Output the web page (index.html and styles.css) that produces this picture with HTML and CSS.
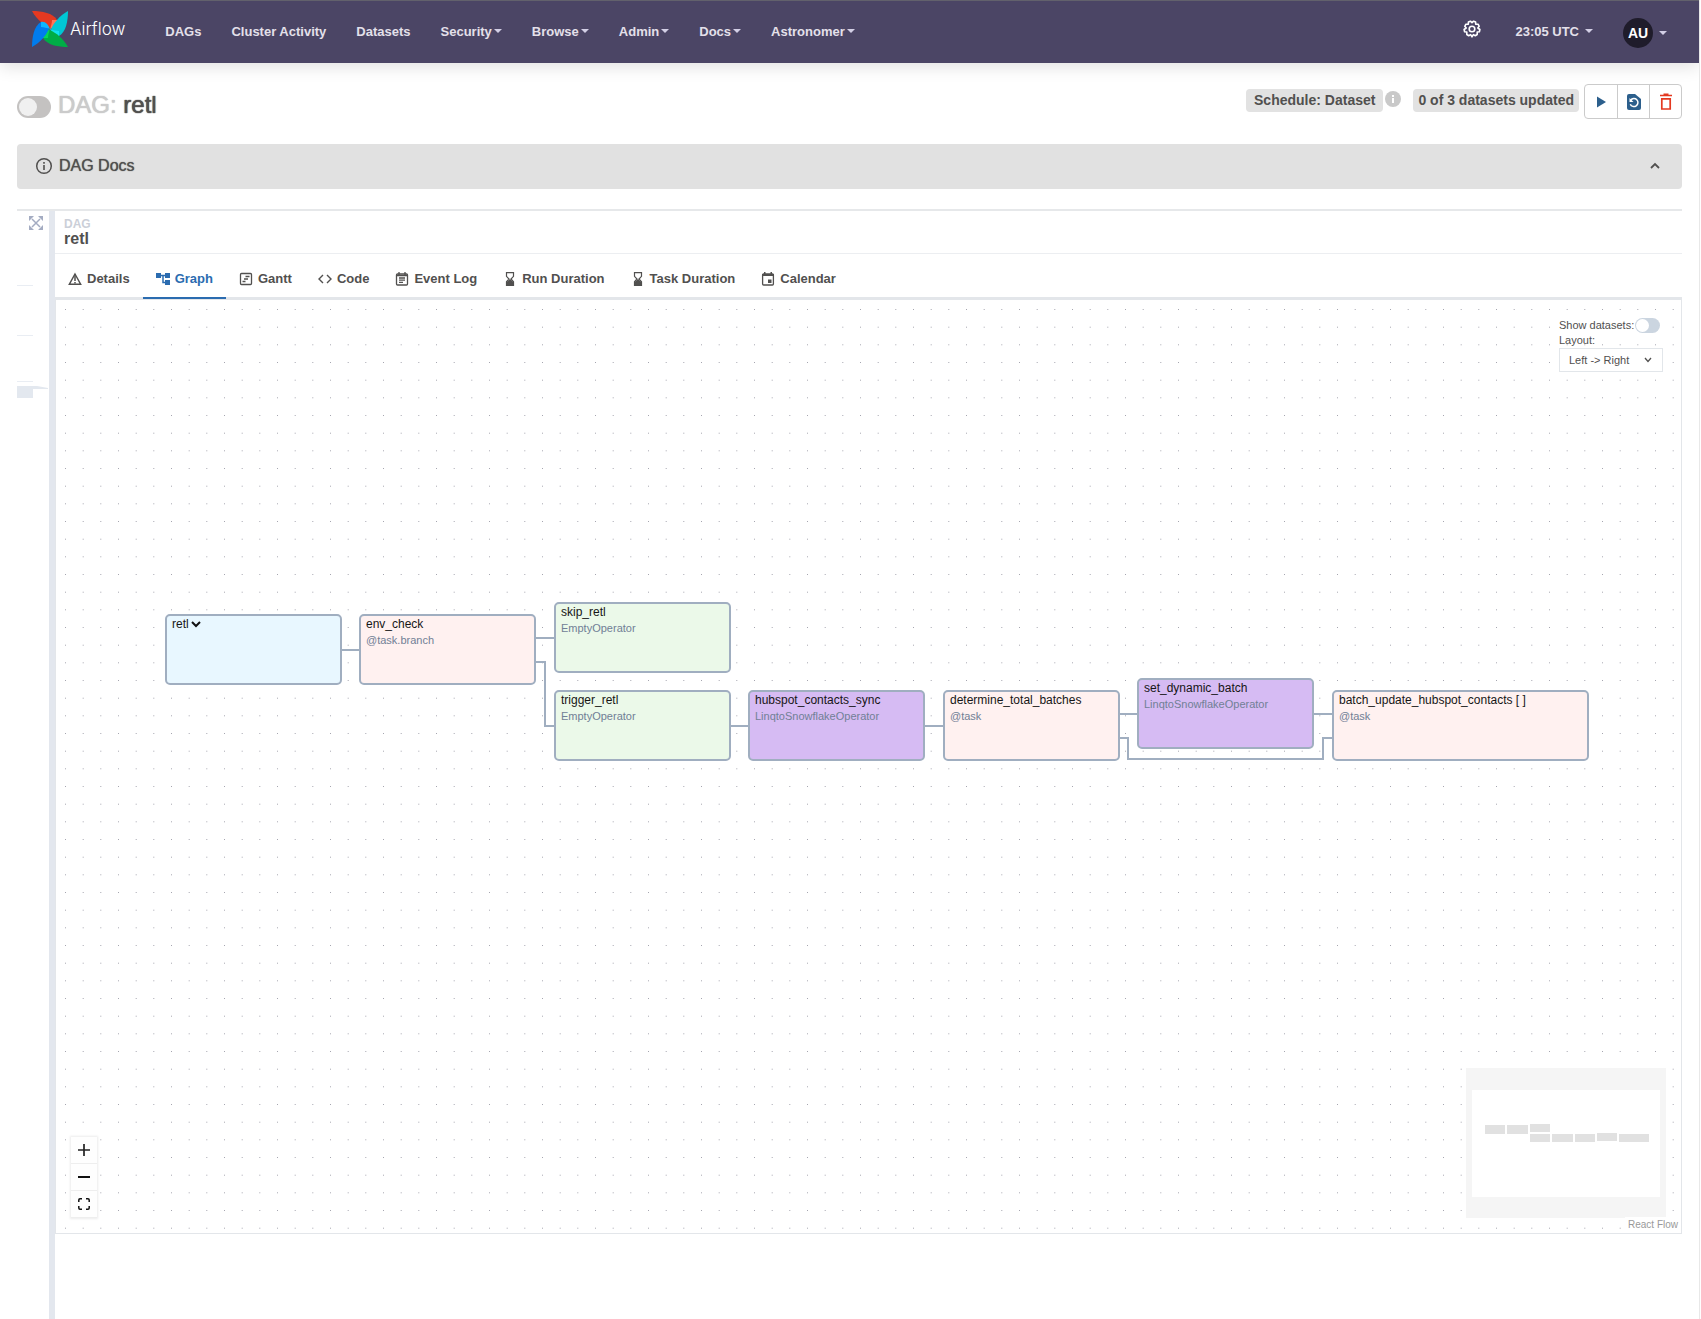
FILE: index.html
```html
<!DOCTYPE html>
<html lang="en">
<head>
<meta charset="utf-8">
<title>retl - Graph - Airflow</title>
<link rel="stylesheet" href="styles.css">
</head>
<body>
<header class="navbar">
  <a class="brand" href="#">
    <svg width="36" height="36" viewBox="0 0 36 36" aria-hidden="true">
      <path d="M0 0C10 0 21 2 25 9L18 17C12 14 5 9 0 0Z" fill="#e43921"/>
      <path d="M20 9L25 9C26 13 23 16 18 18C19 15 20 12 20 9Z" fill="#ff7557"/>
      <path d="M36 0C36 10 34 21 27 25L19 18C22 12 27 5 36 0Z" fill="#00c7d4"/>
      <path d="M27 20L27 25C23 26 20 23 18 18C21 19 24 20 27 20Z" fill="#11e1ee"/>
      <path d="M36 36C26 36 15 34 11 27L18 19C24 22 31 27 36 36Z" fill="#00ad46"/>
      <path d="M16 27L11 27C10 23 13 20 18 18C17 21 16 24 16 27Z" fill="#04d659"/>
      <path d="M0 36C0 26 2 15 9 11L17 18C14 24 9 31 0 36Z" fill="#017cee"/>
      <path d="M9 16L9 11C13 10 16 13 18 18C15 17 12 16 9 16Z" fill="#0cb6ff"/>
    </svg>
    <span>Airflow</span>
  </a>
  <nav class="menu">
    <a href="#">DAGs</a>
    <a href="#">Cluster Activity</a>
    <a href="#">Datasets</a>
    <button type="button">Security<i class="caret"></i></button>
    <button type="button">Browse<i class="caret"></i></button>
    <button type="button">Admin<i class="caret"></i></button>
    <button type="button">Docs<i class="caret"></i></button>
    <button type="button">Astronomer<i class="caret"></i></button>
  </nav>
  <div class="tools">
    <button type="button" class="gear" aria-label="Settings">
      <svg width="18" height="18" viewBox="0 0 18 18" fill="none" stroke="#fff" stroke-width="1.6" stroke-linejoin="round"><path d="M7.4 1.2L9 2.6L10.6 1.2L12.6 2L12.7 4.1L15.2 4.3L16.2 6.3L14.8 8L16.9 9.5L16.4 11.7L14.2 12L14.2 14.5L12.3 15.7L10.4 14.6L9 16.8L7.6 14.6L5.7 15.7L3.8 14.5L3.8 12L1.6 11.7L1.1 9.5L3.2 8L1.8 6.3L2.8 4.3L5.3 4.1L5.4 2Z"/><circle cx="9" cy="9" r="2.8"/></svg>
    </button>
    <button type="button" class="clock">23:05 UTC<i class="caret"></i></button>
    <button type="button" class="user"><span class="avatar">AU</span><i class="caret"></i></button>
  </div>
</header>

<main>
  <div class="title-row">
    <input type="checkbox" class="pause" id="pause" aria-label="Pause or unpause DAG">
    <h1><span>DAG:</span> retl</h1>
    <div class="dag-info">
      <a class="badge" href="#">Schedule: Dataset</a>
      <svg class="hint" width="16" height="16" viewBox="0 0 16 16"><circle cx="8" cy="8" r="8" fill="#c9c9c9"/><path d="M7 7h2v5H7zM7 4h2v2H7z" fill="#fff"/></svg>
      <a class="badge badge-wide" href="#">0 of 3 datasets updated</a>
      <div class="actions">
        <button type="button" aria-label="Trigger DAG"><svg width="20" height="20" viewBox="0 0 20 20"><path d="M6 4.5V15.500L15 10Z" fill="#2c5f8c"/></svg></button>
        <button type="button" aria-label="Reparse DAG"><svg width="20" height="20" viewBox="0 0 20 20"><path d="M5 2h6l6 5v9a2 2 0 0 1-2 2H5a2 2 0 0 1-2-2V4a2 2 0 0 1 2-2z" fill="#2c5f8c"/><path d="M6.700 8.200A4 4 0 1 1 6.300 12.200" fill="none" stroke="#fff" stroke-width="1.500"/><path d="M5.500 6v4h4z" fill="#fff"/></svg></button>
        <button type="button" aria-label="Delete DAG"><svg width="20" height="20" viewBox="0 0 20 20" fill="none" stroke="#e43921" stroke-width="1.700"><path d="M4 3.500h12M7.500 2.300h5M5.800 6.800h8.400V17H5.800z"/></svg></button>
      </div>
    </div>
  </div>

  <button type="button" class="docs">
    <svg width="18" height="18" viewBox="0 0 18 18"><circle cx="9" cy="9" r="7.300" fill="none" stroke="#51504f" stroke-width="1.500"/><path d="M8.200 8h1.600v5H8.200zM8.200 5h1.600v1.700H8.200z" fill="#51504f"/></svg>
    <span>DAG Docs</span>
    <svg class="chev" width="12" height="12" viewBox="0 0 12 12"><path d="M2 8L6 4L10 8" fill="none" stroke="#51504f" stroke-width="1.800"/></svg>
  </button>

  <div class="workspace">
    <aside class="grid-pane">
      <button type="button" aria-label="Expand grid"><svg width="14" height="14" viewBox="0 0 14 14"><path d="M3 3L11 11M11 3L3 11" stroke="#a4acc2" stroke-width="1.500"/><path d="M0 0h5L0 5zM14 0v5L9 0zM0 14V9l5 5zM14 14H9l5-5z" fill="#a4acc2"/></svg></button>
      <svg width="32" height="120" viewBox="0 0 32 120"><path d="M0 5.500h16M0 55.500h16M0 101.500h16" stroke="#e9edf3"/><path d="M0 106h20L31 108v1H16v9H0z" fill="#e3e8ef"/></svg>
    </aside>
    <div class="handle"></div>
    <section class="detail">
      <div class="crumb"><small>DAG</small><strong>retl</strong></div>
      <div class="tabs" role="tablist">
        <button type="button" role="tab"><svg viewBox="0 0 14 14"><path d="M7 2L12.700 12.300H1.300Z" fill="none" stroke="currentColor" stroke-width="1.400"/><path d="M7 2v7M7 10v1.500" stroke="currentColor" stroke-width="1.500"/></svg>Details</button>
        <button type="button" role="tab" aria-selected="true" class="active"><svg viewBox="0 0 14 14"><path d="M0 1h5v5H0zM9 1h5v5H9zM9 8h5v5H9z" fill="currentColor"/><path d="M5 3.500h4M7 3.500v7h2" fill="none" stroke="currentColor" stroke-width="1.500"/></svg>Graph</button>
        <button type="button" role="tab"><svg viewBox="0 0 14 14" fill="none" stroke="currentColor" stroke-width="1.300"><rect x="1.500" y="1.500" width="11" height="11" rx="1"/><path d="M6.500 4.500h4M5 7h4M3.500 9.500h3"/></svg>Gantt</button>
        <button type="button" role="tab"><svg viewBox="0 0 14 14" fill="none" stroke="currentColor" stroke-width="1.400"><path d="M5 3L1 7L5 11M9 3L13 7L9 11"/></svg>Code</button>
        <button type="button" role="tab"><svg viewBox="0 0 14 14" fill="none" stroke="currentColor" stroke-width="1.300"><rect x="1.500" y="2" width="11" height="11" rx="1"/><path d="M4 0v3M10 0v3M1.500 3.500h11M4 6h6M4 8.200h6M4 10.400h4"/></svg>Event Log</button>
        <button type="button" role="tab"><svg viewBox="0 0 14 14"><path d="M3.500.700h7v3.600L8 7l2.500 2.700v3.600h-7V9.700L6 7L3.500 4.300z" fill="none" stroke="currentColor" stroke-width="1.200"/><path d="M7 7l3.500 3v3.300h-7V10z" fill="currentColor"/></svg>Run Duration</button>
        <button type="button" role="tab"><svg viewBox="0 0 14 14"><path d="M3.500.700h7v3.600L8 7l2.500 2.700v3.600h-7V9.700L6 7L3.500 4.300z" fill="none" stroke="currentColor" stroke-width="1.200"/><path d="M7 7l3.500 3v3.300h-7V10z" fill="currentColor"/></svg>Task Duration</button>
        <button type="button" role="tab"><svg viewBox="0 0 14 14"><rect x="1.600" y="2" width="10.800" height="11" rx="1" fill="none" stroke="currentColor" stroke-width="1.300"/><path d="M1 2h12v2H1zM3 0h1.500v2H3zM9.500 0H11v2H9.500zM7 7.500h3.500V11H7z" fill="currentColor"/></svg>Calendar</button>
      </div>

      <div class="canvas">
        <svg class="layer" aria-hidden="true">
          <defs>
            <pattern id="dots" x="9" y="9" width="53" height="53" patternUnits="userSpaceOnUse">
              <path d="M0 .5h1m16.700 0h1m16.600 0h1M0 18.200h1m16.700 0h1m16.600 0h1M0 35.800h1m16.700 0h1m16.600 0h1" stroke="#a6a6b0" stroke-width="1"/>
            </pattern>
          </defs>
          <rect width="100%" height="100%" fill="url(#dots)"/>
          <path d="M285 350H303M480 338H498M480 362H489V426H498M675 426H692M869 426H887M1063 414H1081M1063 438H1072V459H1267V438H1276M1258 414H1276" fill="none" stroke="#a0aec0" stroke-width="2"/>
        </svg>

        <div class="node dag" style="left:109px;top:314px"><button type="button">retl <svg width="10" height="7" viewBox="0 0 10 7"><path d="M1 1L5 5L9 1" fill="none" stroke="#111" stroke-width="2"/></svg></button></div>
        <div class="node task" style="left:303px;top:314px"><b>env_check</b><span>@task.branch</span></div>
        <div class="node empty" style="left:498px;top:302px"><b>skip_retl</b><span>EmptyOperator</span></div>
        <div class="node empty" style="left:498px;top:390px"><b>trigger_retl</b><span>EmptyOperator</span></div>
        <div class="node snow" style="left:692px;top:390px"><b>hubspot_contacts_sync</b><span>LinqtoSnowflakeOperator</span></div>
        <div class="node task" style="left:887px;top:390px"><b>determine_total_batches</b><span>@task</span></div>
        <div class="node snow" style="left:1081px;top:378px"><b>set_dynamic_batch</b><span>LinqtoSnowflakeOperator</span></div>
        <div class="node task mapped" style="left:1276px;top:390px"><b>batch_update_hubspot_contacts [ ]</b><span>@task</span></div>

        <div class="options">
          <div class="switch-row"><label for="ds">Show datasets:</label><input type="checkbox" id="ds"></div>
          <label for="layout">Layout:</label>
          <div class="select">
            <select id="layout"><option>Left -&gt; Right</option><option>Right -&gt; Left</option></select>
            <svg width="10" height="10" viewBox="0 0 10 10"><path d="M2 3L5 6.500L8 3" fill="none" stroke="#51504f" stroke-width="1.300"/></svg>
          </div>
        </div>

        <div class="controls">
          <button type="button" aria-label="Zoom in"><svg width="12" height="12" viewBox="0 0 12 12"><path d="M6 0v12M0 6h12" stroke="#222" stroke-width="1.700"/></svg></button>
          <button type="button" aria-label="Zoom out"><svg width="12" height="12" viewBox="0 0 12 12"><path d="M0 6h12" stroke="#111" stroke-width="2"/></svg></button>
          <button type="button" aria-label="Fit view"><svg width="12" height="12" viewBox="0 0 12 12"><path d="M.8 4V2q0-1.200 1.200-1.200h2M8 .8h2q1.200 0 1.200 1.200v2M11.200 8v2q0 1.200-1.200 1.200H8M4 11.200H2Q.8 11.200.8 10V8" fill="none" stroke="#111" stroke-width="1.500"/></svg></button>
        </div>

        <svg class="minimap" width="200" height="150" viewBox="0 0 200 150" aria-hidden="true">
          <rect width="200" height="150" fill="#f5f5f5"/>
          <rect x="6" y="22" width="188" height="107" fill="#fff"/>
          <path d="M19 57h20v9H19zM41 57h21v9H41zM64 56h20v8H64zM64 66h20v8H64zM86 66h21v8H86zM109 66h20v8H109zM131 65h20v8H131zM153 66h30v8H153z" fill="#e1e1e1"/>
        </svg>
        <a class="credit" href="#">React Flow</a>
      </div>
    </section>
  </div>
</main>
</body>
</html>
```
FILE: styles.css
```css
* { box-sizing: border-box; }
body {
  margin: 0 1px 0 0;
  border-right: 1px solid #e8e8e8;
  min-height: 100vh;
  display: flex;
  flex-direction: column;
  background: #fff;
  color: #51504f;
  font-family: "Liberation Sans", Arial, sans-serif;
  font-size: 14px;
}
button, select, input { font: inherit; color: inherit; margin: 0; }
button { border: 0; padding: 0; background: none; cursor: pointer; }
a { color: inherit; text-decoration: none; }
svg { display: block; flex: none; }

/* Top navigation */
.navbar {
  height: 63px;
  display: flex;
  align-items: center;
  padding: 0 32px 2px;
  border-top: 1px solid #62616c;
  background: #4b4565;
  color: #e4e0ea;
  font-size: 13px;
  font-weight: bold;
  box-shadow: 0 4px 16px rgba(0, 0, 0, .12);
}
.brand { display: flex; align-items: center; gap: 2px; margin-bottom: 4px; color: #fff; font: 300 17px/20px Inter, sans-serif; }
.menu { display: flex; gap: 30px; margin-left: 40px; }
.menu button, .tools button { display: flex; align-items: center; font-weight: bold; }
.caret { margin-left: 2px; border: 4px solid transparent; border-top-color: #d3cfe6; border-bottom: 0; }
.tools { display: flex; align-items: center; margin-left: auto; }
.gear { margin: 0 34px 4px 0; }
.clock .caret { margin-left: 6px; }
.user { margin: 4px 0 0 30px; }
.user .caret { margin-left: 6px; }
.avatar { width: 30px; height: 30px; border-radius: 50%; background: #1f1c2b; color: #fff; font-size: 14px; line-height: 30px; text-align: center; }

main { flex: 1; display: flex; flex-direction: column; padding: 0 17px; }

/* DAG title and actions */
.title-row { height: 81px; display: flex; align-items: flex-start; padding-top: 21px; }
.pause, .switch-row input { appearance: none; border-radius: 99px; display: flex; align-items: center; cursor: pointer; }
.pause { width: 34px; height: 22px; margin: 12px 7px 0 0; padding: 2px; background: #c4c2c1; }
.pause::before { content: ""; width: 18px; height: 18px; border-radius: 50%; background: #f0f0f0; }
h1 { margin: 7px 0 0; font-size: 24px; line-height: 28px; font-weight: normal; text-shadow: 0 0 1px currentColor, 0 0 1px currentColor; }
h1 span { color: #cbcbcb; }
.dag-info { display: flex; align-items: flex-start; margin-left: auto; }
.badge { margin-top: 5px; padding: 0 8px; border-radius: 4px; background: #e2e2e2; font-weight: bold; line-height: 23px; }
.badge-wide { padding: 0 5px; }
.hint { margin: 7px 12px 0 2px; }
.actions { display: flex; height: 35px; margin-left: 5px; border: 1px solid #cbcbcb; border-radius: 4px; }
.actions button { width: 32px; display: flex; align-items: center; justify-content: center; }
.actions button + button { border-left: 1px solid #cbcbcb; }

.docs { display: flex; align-items: center; gap: 6px; height: 45px; padding: 0 21px 2px 18px; border-radius: 4px; background: #e1e1e1; font-size: 16px; text-shadow: 0 0 1px currentColor; }
.chev { margin-left: auto; }

/* Grid pane, drag handle and detail panel */
.workspace { flex: 1; display: flex; margin-top: 20px; border-top: 2px solid #e6e8ea; }
.grid-pane { width: 32px; }
.grid-pane button { display: block; margin: 5px 0 50px 12px; }
.handle { width: 6px; background: #e3e7ee; }
.detail { flex: 1; min-width: 0; }
.crumb { height: 43px; display: flex; flex-direction: column; padding: 6px 9px; border-bottom: 1px solid #eceef1; }
.crumb small { color: #cbcfd8; font-size: 12px; line-height: 14px; font-weight: bold; }
.crumb strong { font-size: 16px; line-height: 16px; }
.tabs { height: 45px; display: flex; border-bottom: 2px solid #e3e6ea; font-size: 13px; }
.tabs button { height: 45px; display: flex; align-items: center; gap: 5px; padding: 6px 13px 0; border-bottom: 2px solid transparent; font-weight: bold; white-space: nowrap; }
.tabs svg { width: 14px; height: 14px; }
.tabs .active { border-color: #2b6cb0; color: #2b6cb0; }

/* Graph */
.canvas { position: relative; height: calc(100vh - 384px); min-height: 600px; overflow: hidden; border: 1px solid #e3e6ea; }
.layer { position: absolute; inset: 0; width: 100%; height: 100%; }
.node { position: absolute; width: 177px; height: 71px; padding: 1px 5px; border: 2px solid #a0aec0; border-radius: 5px; display: flex; flex-direction: column; align-items: flex-start; color: #161616; font-size: 12px; line-height: 15px; }
.node b { font-weight: normal; }
.node span { color: #718096; font-size: 11px; line-height: 16px; }
.node button { display: flex; align-items: center; gap: 2px; }
.dag { background: #e8f7ff; }
.task { background: #fff1f0; }
.empty { background: #ebf9e9; }
.snow { background: #d6bbf3; }
.mapped { width: 257px; }

.options { position: absolute; top: 18px; right: 18px; width: 104px; font-size: 11px; line-height: 15px; }
.options label { display: block; white-space: nowrap; }
.switch-row { display: flex; align-items: center; gap: 1px; }
.switch-row input { flex: none; width: 25px; height: 15px; padding: 1px; background: #cbd5e0; }
.switch-row input::before { content: ""; width: 13px; height: 13px; border-radius: 50%; background: #fff; }
.select { position: relative; }
.select select { appearance: none; width: 100%; height: 24px; padding: 0 9px; border: 1px solid #e2e6ea; border-radius: 0; background: #fff; }
.select svg { position: absolute; right: 10px; top: 7px; pointer-events: none; }

.controls { position: absolute; left: 15px; bottom: 15px; display: flex; flex-direction: column; box-shadow: 0 0 2px 1px rgba(0, 0, 0, .08); }
.controls button { width: 26px; height: 27px; display: flex; align-items: center; justify-content: center; border-bottom: 1px solid #eee; background: #fefefe; }
.minimap { position: absolute; right: 15px; bottom: 15px; }
.credit { position: absolute; right: 0; bottom: 0; padding: 2px 3px; background: #fff; color: #999; font-size: 10px; line-height: 12px; }
```
